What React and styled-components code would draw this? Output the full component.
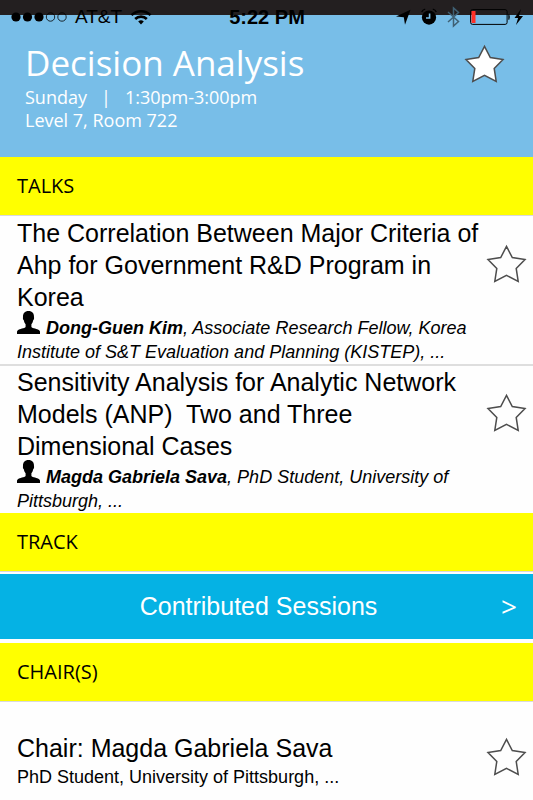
import { useState } from 'react';
import styled, { createGlobalStyle } from 'styled-components';

const GlobalStyle = createGlobalStyle`
  * {
    box-sizing: border-box;
  }

  body {
    margin: 0;
    background: #fefefe;
    color: #000;
    font-family: "Liberation Sans", Arial, sans-serif;
  }
`;

const Header = styled.header`
  min-height: 157px;
  padding-bottom: 24px;
  background: linear-gradient(#231f20 15px, #78bee8 15px);
  color: #fff;
  font-family: "Open Sans", "Noto Sans", sans-serif;
`;

const StatusBar = styled.div`
  display: grid;
  grid-template-columns: 1fr auto 1fr;
  align-items: center;
  margin-bottom: 16px;
  padding: 6px 10px 0 11px;
  color: #000;
  font-family: "Liberation Sans", Arial, sans-serif;
  font-size: 19px;
  line-height: 22px;
`;

const StatusGroup = styled.div`
  display: flex;
  align-items: center;
  justify-content: ${props => props.$end ? 'flex-end' : 'flex-start'};
  gap: ${props => props.$end ? '10px' : '8px'};

  svg {
    flex: none;
  }
`;

const Clock = styled.span`
  font-size: 20px;
  font-weight: 700;
`;

const HeaderContent = styled.div`
  display: flex;
  justify-content: space-between;
  align-items: flex-start;
  padding: 0 28px 0 25px;
`;

const SessionTitle = styled.h1`
  margin: 0 0 4px;
  font-size: 35px;
  font-weight: 400;
  line-height: 38px;
`;

const SessionMeta = styled.p`
  margin: 0;
  font-size: 18px;
  line-height: 23px;
  white-space: pre-wrap;
`;

const SectionHeading = styled.h2`
  margin: 0;
  padding: 0 17px;
  background: #ff0;
  border-bottom: 1px solid #d9d9dd;
  font-family: "Open Sans", "Noto Sans", sans-serif;
  font-size: 20px;
  font-weight: 400;
  line-height: 58px;
`;

const TalkList = styled.ul`
  margin: 0;
  padding: 1px 0 0;
  list-style: none;
`;

const Row = styled.div`
  display: flex;
  justify-content: space-between;
  align-items: flex-start;
  gap: 4px;
  padding: 0 6px 0 17px;
`;

const TalkItem = styled.li`
  & + & {
    border-top: 2px solid #dedede;
  }
`;

const RowText = styled.div`
  flex: 1;
  min-width: 0;
`;

const RowTitle = styled.h3`
  margin: 0 0 3px;
  font-size: 25px;
  font-weight: 400;
  line-height: 32px;
  white-space: pre-wrap;
`;

const Speaker = styled.p`
  margin: 0;
  font-size: 18px;
  font-style: italic;
  line-height: 24px;

  svg {
    margin: -8px 6px 0 0;
    vertical-align: baseline;
  }
`;

const StarButton = styled.button`
  flex: none;
  display: block;
  margin-top: ${props => props.$row ? '27px' : '0'};
  padding: 0;
  border: none;
  background: none;
  cursor: pointer;

  svg {
    display: block;
  }
`;

const TrackLink = styled.a`
  display: flex;
  align-items: center;
  margin: 2px 0 4px;
  padding: 0 16px;
  background: #05b2e4;
  color: #fff;
  font-size: 25px;
  line-height: 65px;
  text-decoration: none;
`;

const TrackName = styled.span`
  flex: 1;
  text-align: center;
`;

const Chevron = styled.span`
  font-family: "Open Sans", "Noto Sans", sans-serif;
  font-size: 28px;
`;

const ChairRow = styled(Row)`
  padding-top: 8px;
`;

const ChairText = styled(RowText)`
  padding-top: 22px;
`;

const ChairDetail = styled.p`
  margin: 0;
  font-size: 18px;
  line-height: 20px;
`;

const talks = [
    {
        title: 'The Correlation Between Major Criteria of Ahp for Government R&D Program in Korea',
        speaker: 'Dong-Guen Kim',
        role: 'Associate Research Fellow, Korea Institute of S&T Evaluation and Planning (KISTEP), ...',
    },
    {
        title: 'Sensitivity Analysis for Analytic Network Models (ANP)  Two and Three Dimensional Cases',
        speaker: 'Magda Gabriela Sava',
        role: 'PhD Student, University of Pittsburgh, ...',
    },
];

function Star({ label, initial = false, row = false }) {
    const [starred, setStarred] = useState(initial);

    return (
        <StarButton
            type="button"
            $row={row}
            aria-label={label}
            aria-pressed={starred}
            onClick={() => setStarred(!starred)}
        >
            <svg width="42" height="40" viewBox="0 0 42 40">
                <path
                    d="M21.5 2.4 27.3 13.6 40 15.5 31.2 24.4 33.2 37.5 21.5 31.4 9.8 37.5 11.8 24.4 3 15.5 15.7 13.6Z"
                    fill={starred ? '#fff' : 'none'}
                    stroke="#4d4d4d"
                    strokeWidth="1.5"
                />
            </svg>
        </StarButton>
    );
}

function SignalDots() {
    return (
        <svg width="56" height="12" viewBox="0 0 56 12">
            {[0, 1, 2, 3, 4].map(i => (
                <circle
                    key={i}
                    cx={5 + i * 11.5}
                    cy="6"
                    r={i < 3 ? 4.6 : 4.2}
                    fill={i < 3 ? '#000' : 'none'}
                    stroke={i < 3 ? 'none' : '#000'}
                    strokeWidth="0.8"
                />
            ))}
        </svg>
    );
}

function WifiIcon() {
    return (
        <svg width="22" height="16" viewBox="0 0 22 16" fill="none" stroke="#000" strokeWidth="2.6">
            <path d="M1.5 6.2a13.4 13.4 0 0 1 19 0" />
            <path d="M5.2 10a8.2 8.2 0 0 1 11.6 0" />
            <path d="M11 15.5 8.2 12.5a4 4 0 0 1 5.6 0Z" fill="#000" stroke="none" />
        </svg>
    );
}

function LocationIcon() {
    return (
        <svg width="15" height="16" viewBox="0 0 15 16">
            <path d="M14.5 .8 9 15.8 7.8 8.2 0 7.4Z" fill="#000" />
        </svg>
    );
}

function AlarmIcon() {
    return (
        <svg width="16" height="18" viewBox="0 0 16 18" fill="none" stroke="#000">
            <circle cx="8" cy="9.6" r="7.1" fill="#000" stroke="none" />
            <path d="M.7 4Q1.6 1.8 4.2 1.2M15.3 4Q14.4 1.8 11.8 1.2" strokeWidth="1.3" />
            <path d="M8.6 5.6V10H5" stroke="#78bee8" strokeWidth="1.6" />
        </svg>
    );
}

function BluetoothIcon() {
    return (
        <svg width="13" height="22" viewBox="0 0 13 22" fill="none" stroke="#3f6073" strokeWidth="1.5">
            <path d="M1 6 11.5 15.5 6.5 20V2L11.5 6.5 1 16" />
        </svg>
    );
}

function BatteryIcon() {
    return (
        <svg width="53" height="18" viewBox="0 0 53 18">
            <rect x=".6" y="1.6" width="36.5" height="14.8" rx="2" fill="none" stroke="#000" />
            <rect x="1.5" y="3" width="4" height="12" fill="#ff3027" />
            <path d="M38.3 6.2h1q1 2.8 0 5.6h-1Z" fill="#000" />
            <path d="M51 1 44.5 9.9h3.6L46 17 53 7.9h-3.9Z" fill="#000" />
        </svg>
    );
}

function PersonIcon() {
    return (
        <svg width="23" height="23" viewBox="0 0 23 23" aria-hidden="true">
            <path
                d="M11.5 0C7.7 0 5.8 2.5 6 6.2 5.7 7.2 6.1 8.6 6.8 9.2c.4 2 1 3.2 1.8 4.1v2.6C7.6 17.4 2.4 17.6 1 19L0 20.5V23h23v-2.5L22 19c-1.4-1.4-6.6-1.6-7.6-3.1v-2.6c.8-.9 1.4-2.1 1.8-4.1.7-.6 1.1-2 .8-3C17.2 2.5 15.3 0 11.5 0Z"
                fill="#000"
            />
        </svg>
    );
}

export default function App() {
    return (
        <>
            <GlobalStyle />
            <Header>
                <StatusBar>
                    <StatusGroup>
                        <SignalDots />
                        <span>AT&amp;T</span>
                        <WifiIcon />
                    </StatusGroup>
                    <Clock>5:22 PM</Clock>
                    <StatusGroup $end>
                        <LocationIcon />
                        <AlarmIcon />
                        <BluetoothIcon />
                        <BatteryIcon />
                    </StatusGroup>
                </StatusBar>
                <HeaderContent>
                    <div>
                        <SessionTitle>Decision Analysis</SessionTitle>
                        <SessionMeta>{'Sunday   |   1:30pm-3:00pm'}</SessionMeta>
                        <SessionMeta>Level 7, Room 722</SessionMeta>
                    </div>
                    <Star label="Star this session" initial />
                </HeaderContent>
            </Header>

            <main>
                <SectionHeading>TALKS</SectionHeading>
                <TalkList>
                    {talks.map(talk => (
                        <TalkItem key={talk.speaker}>
                            <Row>
                                <RowText>
                                    <RowTitle>{talk.title}</RowTitle>
                                    <Speaker>
                                        <PersonIcon />
                                        <strong>{talk.speaker}</strong>, {talk.role}
                                    </Speaker>
                                </RowText>
                                <Star row label={`Star ${talk.title}`} />
                            </Row>
                        </TalkItem>
                    ))}
                </TalkList>

                <SectionHeading>TRACK</SectionHeading>
                <TrackLink href="#contributed-sessions">
                    <TrackName>Contributed Sessions</TrackName>
                    <Chevron>&gt;</Chevron>
                </TrackLink>

                <SectionHeading>CHAIR(S)</SectionHeading>
                <ChairRow>
                    <ChairText>
                        <RowTitle>Chair: Magda Gabriela Sava</RowTitle>
                        <ChairDetail>PhD Student, University of Pittsburgh, ...</ChairDetail>
                    </ChairText>
                    <Star row label="Star Magda Gabriela Sava" />
                </ChairRow>
            </main>
        </>
    );
}
